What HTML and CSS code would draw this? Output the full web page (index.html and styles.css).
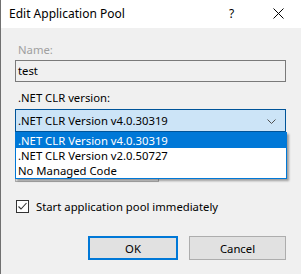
FILE: index.html
```html
<!DOCTYPE html>
<html>
<head>
<meta charset="utf-8">
<link rel="stylesheet" href="styles.css">
</head>
<body>
<div class="window">
  <div class="titlebar">
    <span class="title">Edit Application Pool</span>
    <span class="help">?</span>
    <svg class="close" width="11" height="11" viewBox="0 0 11 11"><path d="M0.5 0.5 L10.5 10.5 M10.5 0.5 L0.5 10.5" stroke="#000" stroke-width="1" fill="none"/></svg>
  </div>
  <div class="content">
    <div class="label disabled">Name:</div>
    <div class="textbox">test</div>
    <div class="label label-gap">.NET CLR version:</div>
    <div class="combo combo-active">
      <span>.NET CLR Version v4.0.30319</span>
      <svg class="chev" width="9" height="5" viewBox="0 0 9 5"><path d="M0.5 0.5 L4.5 4.5 L8.5 0.5" stroke="#505050" stroke-width="1" fill="none"/></svg>
    </div>
    <div class="label label-gap"></div>
    <div class="combo combo-small"></div>
    <label class="check-row">
      <span class="checkbox">
        <svg width="11" height="11" viewBox="0 0 11 11"><path d="M1.5 5.5 L4 8 L9.5 2" stroke="#333" stroke-width="1.1" fill="none"/></svg>
      </span>
      <span>Start application pool immediately</span>
    </label>
    <div class="buttons">
      <div class="btn btn-default">OK</div>
      <div class="btn btn-cancel">Cancel</div>
    </div>
  </div>
  <div class="dropdown">
    <div class="item selected">.NET CLR Version v4.0.30319</div>
    <div class="item">.NET CLR Version v2.0.50727</div>
    <div class="item">No Managed Code</div>
  </div>
</div>
</body>
</html>
```
FILE: styles.css
```css
* { box-sizing: border-box; }
html, body {
  margin: 0;
  padding: 0;
  background: #f0f0f0;
}
body {
  font-family: "Segoe UI", "Noto Sans", sans-serif;
  font-size: 11.3px;
  color: #000;
  width: 301px;
  height: 274px;
  overflow: hidden;
}
.window {
  position: relative;
  width: 301px;
  height: 274px;
  border-left: 1px solid #707070;
  background: #f0f0f0;
}
.titlebar {
  height: 28px;
  background: #fff;
  display: flex;
  align-items: center;
  padding-left: 8px;
}
.title {
  flex: 1;
  font-size: 12px;
  line-height: 16px;
  margin-top: -1px;
}
.help {
  font-size: 12px;
  width: 12px;
  margin-right: 32px;
  margin-top: -2px;
}
.close {
  margin-right: 17px;
  margin-top: -2px;
}
.content {
  padding: 14px 15px 0 14px;
}
.label {
  line-height: 15px;
  height: 15px;
  padding-left: 3px;
  margin-bottom: 3px;
}
.disabled { color: #a0a0a0; }
.label-gap { margin-top: 8px; margin-bottom: 4px; }
.textbox {
  height: 22px;
  border: 1px solid #7a7a7a;
  background: #f0f0f0;
  padding-left: 2px;
  line-height: 20px;
}
.combo {
  height: 23px;
  border: 1px solid #adadad;
  background: #e5e5e5;
  padding-left: 2px;
  line-height: 21px;
  display: flex;
  align-items: center;
}
.combo-active {
  background: #cce4f7;
  border-color: #005499;
  justify-content: space-between;
  padding-right: 9px;
}
.combo-small { width: 144px; }
.chev { margin-top: 1px; }
.check-row {
  display: flex;
  align-items: center;
  margin-top: 18px;
  height: 13px;
  gap: 7px;
  padding-left: 1px;
}
.checkbox {
  width: 13px;
  height: 13px;
  border: 1px solid #333;
  background: #fff;
  display: flex;
  align-items: center;
  justify-content: center;
}
.buttons {
  display: flex;
  justify-content: flex-end;
  gap: 11px;
  margin-top: 23px;
}
.btn {
  height: 24px;
  background: #e1e1e1;
  display: flex;
  align-items: center;
  justify-content: center;
}
.btn-default {
  width: 90px;
  border: 2px solid #0078d7;
}
.btn-cancel {
  width: 97px;
  border: 1px solid #adadad;
}
.dropdown {
  position: absolute;
  left: 14px;
  top: 132px;
  width: 272px;
  height: 47px;
  border: 1px solid #0078d7;
  background: #fff;
  box-shadow: 2px 2px 2px rgba(0, 0, 0, 0.35);
}
.item {
  height: 15px;
  line-height: 15px;
  padding-left: 2px;
}
.selected {
  background: #0078d7;
  color: #fff;
}
```
